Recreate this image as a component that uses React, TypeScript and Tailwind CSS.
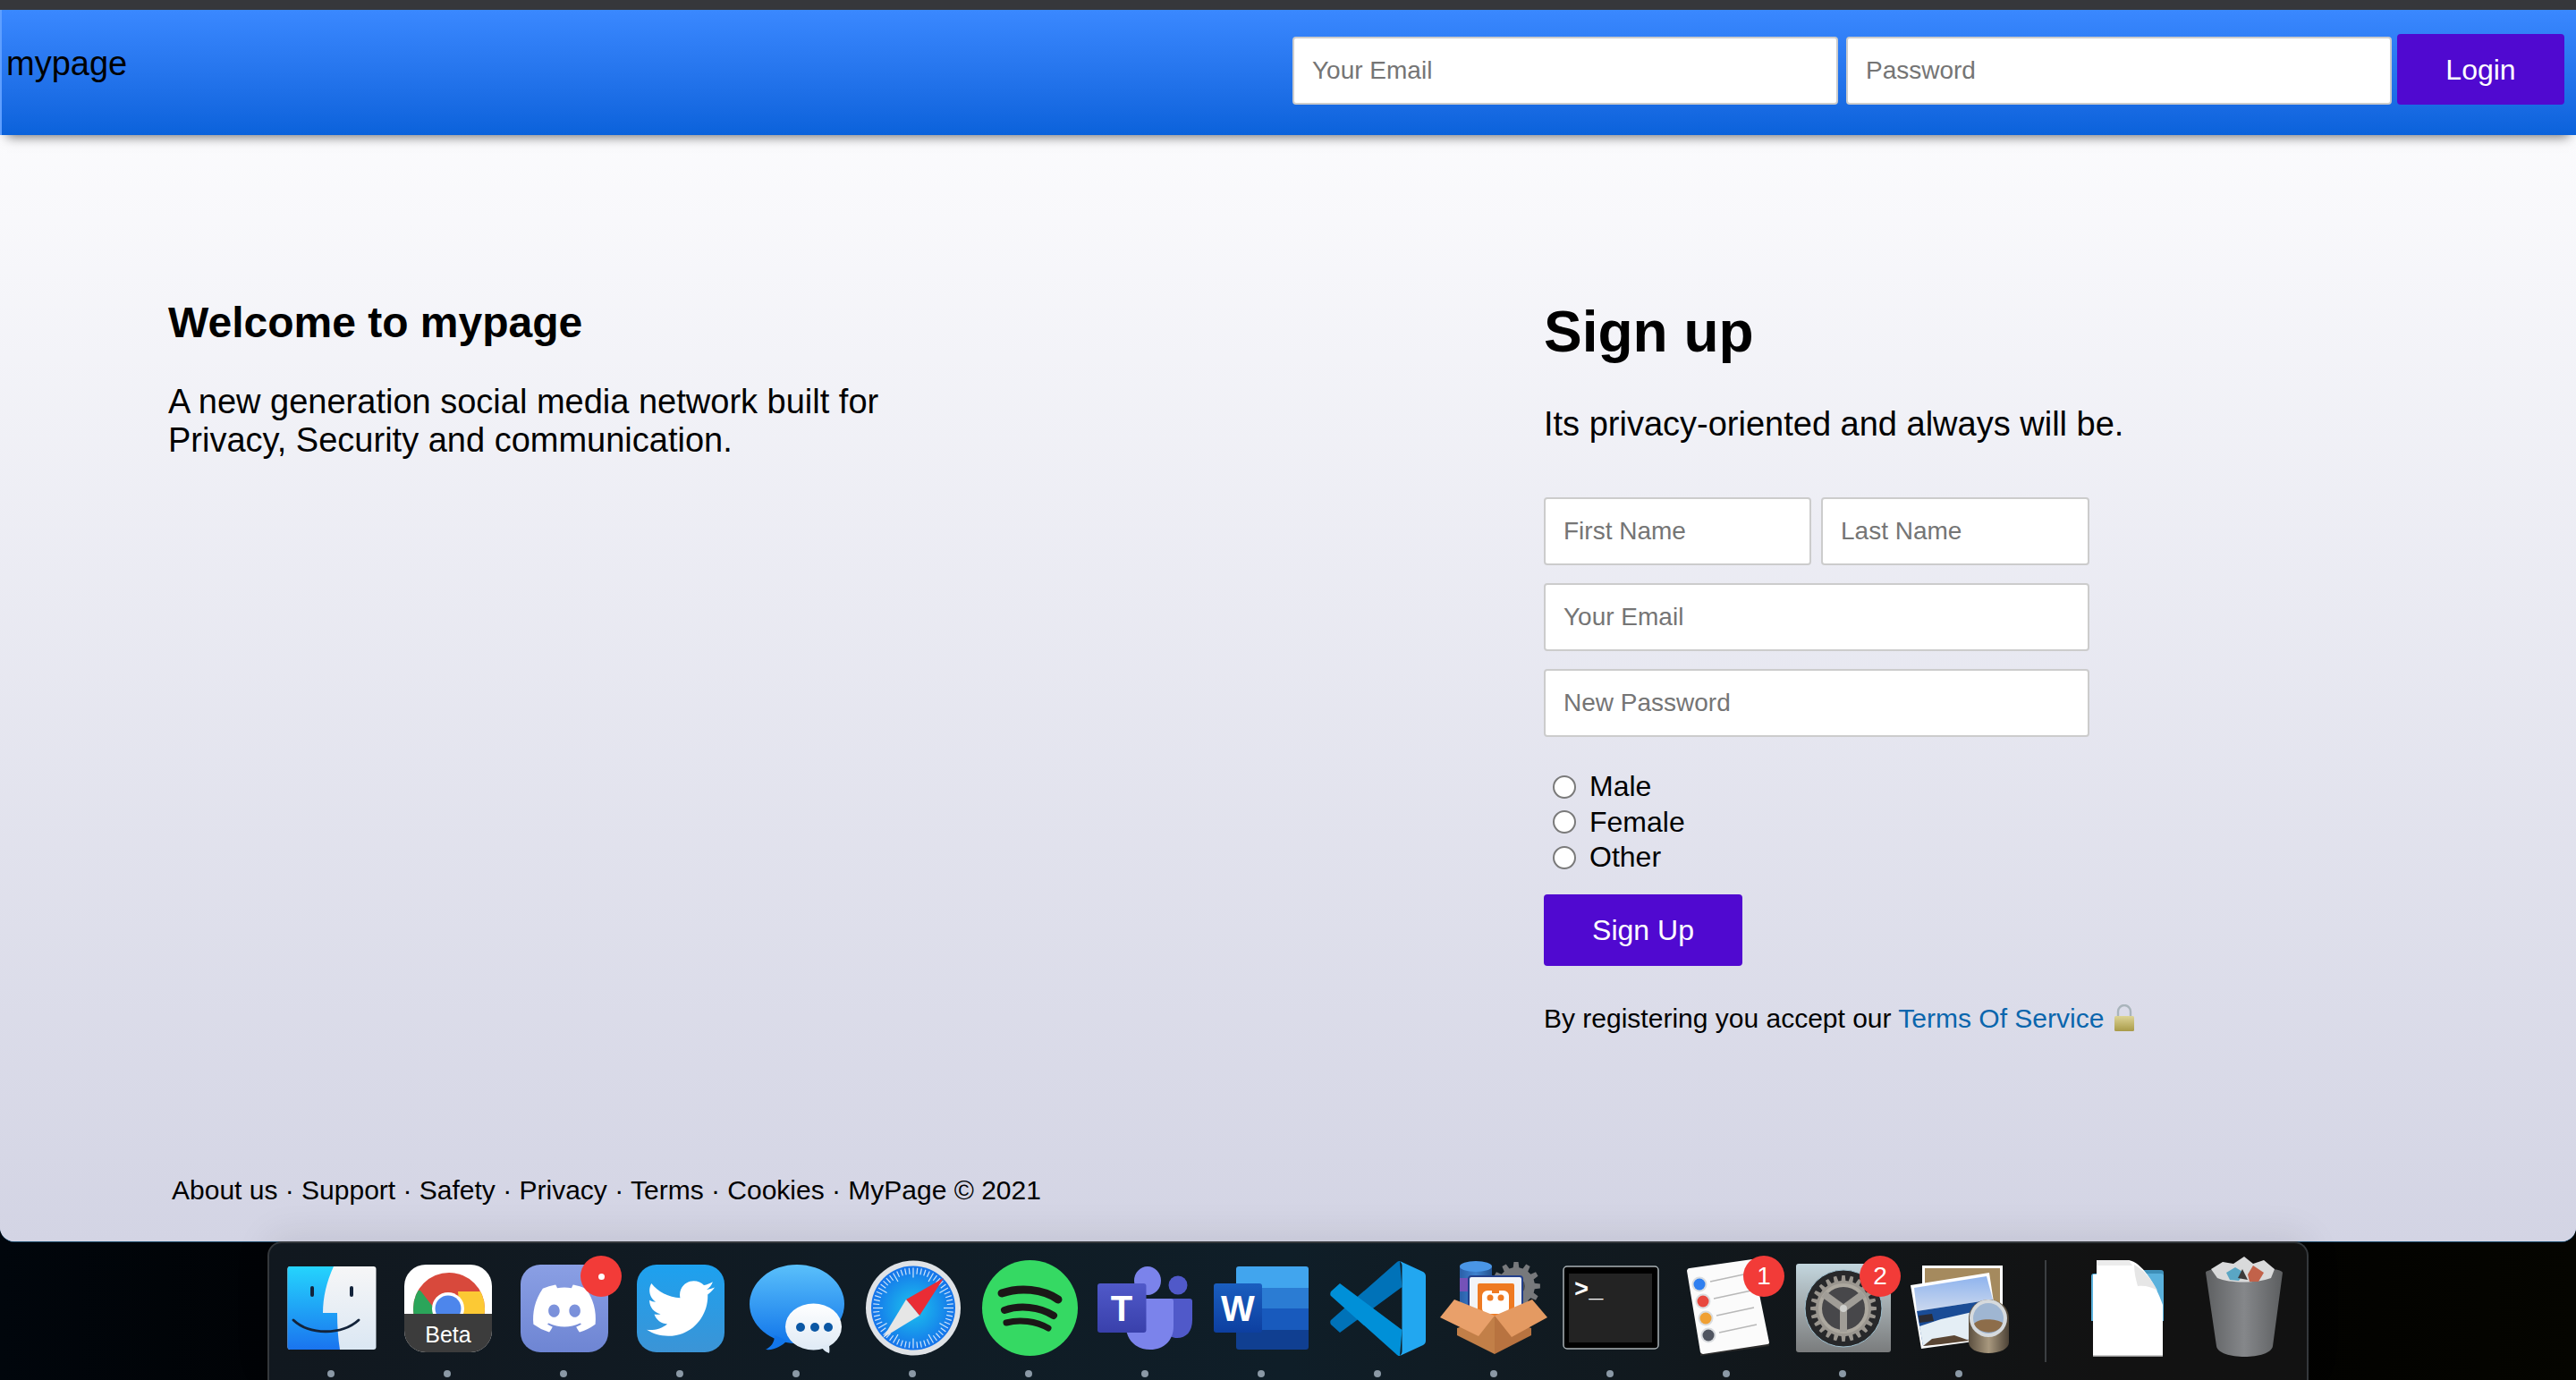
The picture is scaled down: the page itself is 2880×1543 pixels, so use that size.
import type { ReactNode } from "react";
import { FaDiscord, FaTwitter } from "react-icons/fa";

const inputClass =
  "h-[76px] rounded-[4px] border-2 border-[#cccccc] bg-white px-[20px] text-[28px] text-black outline-none placeholder:text-[#757575]";

const footerText = "About us · Support · Safety · Privacy · Terms · Cookies · MyPage © 2021";

const range = (n: number) => Array.from({ length: n }, (_, i) => i);

function gearPath(cx: number, cy: number, outer: number, inner: number, teeth: number) {
  const pts: string[] = [];
  range(teeth).forEach((i) => {
    const step = (Math.PI * 2) / teeth;
    const a = i * step;
    const offsets: [number, number][] = [
      [-0.3, inner],
      [-0.18, outer],
      [0.18, outer],
      [0.3, inner],
    ];
    offsets.forEach(([o, r]) => {
      pts.push(`${(cx + Math.cos(a + o * step) * r).toFixed(2)},${(cy + Math.sin(a + o * step) * r).toFixed(2)}`);
    });
  });
  return `M${pts.join("L")}Z`;
}

function Svg({ children }: { children: ReactNode }) {
  return (
    <svg viewBox="0 0 120 120" className="block h-[120px] w-[120px] overflow-visible">
      {children}
    </svg>
  );
}

function Finder() {
  return (
    <Svg>
      <defs>
        <linearGradient id="finderBlue" x1="0" y1="0" x2="0" y2="1">
          <stop offset="0" stopColor="#25d4fd" />
          <stop offset="1" stopColor="#1a74ef" />
        </linearGradient>
        <linearGradient id="finderWhite" x1="0" y1="0" x2="0" y2="1">
          <stop offset="0" stopColor="#f6f6f7" />
          <stop offset="1" stopColor="#dbe7f3" />
        </linearGradient>
      </defs>
      <rect x="11.5" y="15" width="99" height="93" rx="3" fill="url(#finderWhite)" />
      <path d="M14.5 15H63C55 32 51 50 51 67H67C67 82 68 96 70 108H14.5a3 3 0 0 1-3-3V18a3 3 0 0 1 3-3Z" fill="url(#finderBlue)" />
      <rect x="37" y="37" width="4" height="12" rx="2" fill="#13233a" />
      <rect x="81" y="37" width="4" height="12" rx="2" fill="#13233a" />
      <path d="M18 75C36 92 72 92 91 75" fill="none" stroke="#13233a" strokeWidth="3" strokeLinecap="round" />
    </Svg>
  );
}

function Chrome() {
  return (
    <Svg>
      <defs>
        <clipPath id="chromeTop">
          <rect x="12" y="13" width="98" height="55" />
        </clipPath>
        <clipPath id="chromeRound">
          <circle cx="62" cy="62" r="40" />
        </clipPath>
      </defs>
      <rect x="12" y="13" width="98" height="98" rx="24" fill="#ffffff" />
      <path d="M12 68H110V87a24 24 0 0 1-24 24H36a24 24 0 0 1-24-24Z" fill="#3c3c3c" />
      <g clipPath="url(#chromeTop)">
        <g clipPath="url(#chromeRound)">
          <rect x="20" y="20" width="84" height="50" fill="#d8493c" />
          <path d="M30 42L50 68H15V42Z" fill="#2ba55a" />
          <path d="M104 43H72L74 68H104Z" fill="#fcc934" />
        </g>
        <circle cx="61" cy="62" r="18" fill="#ffffff" />
        <circle cx="61" cy="62" r="14.5" fill="#4d86ec" />
      </g>
      <text x="61" y="100" textAnchor="middle" fontFamily="Liberation Sans, sans-serif" fontSize="25" fill="#ffffff">
        Beta
      </text>
    </Svg>
  );
}

function Discord() {
  return (
    <Svg>
      <defs>
        <linearGradient id="discordBg" x1="0" y1="0" x2="0" y2="1">
          <stop offset="0" stopColor="#8a9fe4" />
          <stop offset="1" stopColor="#6e85d3" />
        </linearGradient>
      </defs>
      <rect x="12" y="13" width="98" height="98" rx="22" fill="url(#discordBg)" />
      <g color="#ffffff">
        <FaDiscord x={23} y={24} size={76} />
      </g>
    </Svg>
  );
}

function Twitter() {
  return (
    <Svg>
      <defs>
        <linearGradient id="twitterBg" x1="0" y1="0" x2="0" y2="1">
          <stop offset="0" stopColor="#1da1ef" />
          <stop offset="1" stopColor="#3b94d6" />
        </linearGradient>
      </defs>
      <rect x="12" y="13" width="98" height="98" rx="22" fill="url(#twitterBg)" />
      <g color="#ffffff">
        <FaTwitter x={23} y={24} size={76} />
      </g>
    </Svg>
  );
}

function Messages() {
  return (
    <Svg>
      <defs>
        <linearGradient id="msgBlue" x1="0" y1="0" x2="0" y2="1">
          <stop offset="0" stopColor="#5ac0fb" />
          <stop offset="1" stopColor="#1276ea" />
        </linearGradient>
        <linearGradient id="msgWhite" x1="0" y1="0" x2="0" y2="1">
          <stop offset="0" stopColor="#ffffff" />
          <stop offset="1" stopColor="#dfeaf5" />
        </linearGradient>
      </defs>
      <ellipse cx="61" cy="57" rx="53" ry="44" fill="url(#msgBlue)" />
      <path d="M36 92C36 100 32 105 26 108C36 109 44 104 50 98Z" fill="#1276ea" />
      <ellipse cx="79.5" cy="82.5" rx="31.5" ry="26" fill="url(#msgWhite)" />
      <path d="M88 104C90 108 92 110 97 112C98 109 97 106 97 102Z" fill="#dfeaf5" />
      <circle cx="65" cy="83" r="5" fill="#0b57a4" />
      <circle cx="81" cy="83" r="5" fill="#0b57a4" />
      <circle cx="96" cy="83" r="5" fill="#0b57a4" />
    </Svg>
  );
}

function Safari() {
  return (
    <Svg>
      <defs>
        <radialGradient id="safariBg">
          <stop offset="0" stopColor="#1cc4ee" />
          <stop offset="1" stopColor="#1573ea" />
        </radialGradient>
      </defs>
      <circle cx="61" cy="61.5" r="53" fill="#dfe2e6" />
      <circle cx="61" cy="61.5" r="47" fill="url(#safariBg)" />
      {range(60).map((i) => {
        const a = (i * Math.PI) / 30;
        const r = i % 5 === 0 ? 34 : 38;
        return (
          <line
            key={i}
            x1={61 + Math.cos(a) * r}
            y1={61.5 + Math.sin(a) * r}
            x2={61 + Math.cos(a) * 45}
            y2={61.5 + Math.sin(a) * 45}
            stroke="#ffffff"
            strokeOpacity="0.8"
            strokeWidth="1.2"
          />
        );
      })}
      <path d="M95 28L53 52L68 70Z" fill="#ea2c35" />
      <path d="M27 95L53 52L68 70Z" fill="#e6e6e6" />
    </Svg>
  );
}

function Spotify() {
  return (
    <Svg>
      <circle cx="61.5" cy="61.5" r="53.5" fill="#35d963" />
      <g fill="none" stroke="#1b1717" strokeLinecap="round">
        <path d="M30 45C50 38 76 40 93 52" strokeWidth="9" />
        <path d="M33 64C50 58 72 60 88 70" strokeWidth="8" />
        <path d="M35 78C50 74 68 76 82 84" strokeWidth="7" />
      </g>
    </Svg>
  );
}

function Teams() {
  return (
    <Svg>
      <defs>
        <linearGradient id="teamsTile" x1="0" y1="0" x2="0" y2="1">
          <stop offset="0" stopColor="#5059c9" />
          <stop offset="1" stopColor="#3940ab" />
        </linearGradient>
      </defs>
      <circle cx="97" cy="36" r="10.5" fill="#5059c9" />
      <path d="M85 51H110a3 3 0 0 1 3 3V75C113 88 106 95 96 95C85 95 80 85 80 75Z" fill="#5059c9" />
      <ellipse cx="63" cy="31" rx="15" ry="16" fill="#7b83eb" />
      <path d="M42 51H89a3 3 0 0 1 3 3V82C92 98 81 108 66 108C51 108 39 98 39 82V54a3 3 0 0 1 3-3Z" fill="#7b83eb" />
      <rect x="7" y="34" width="54.5" height="55" rx="3" fill="url(#teamsTile)" />
      <text x="34" y="76" textAnchor="middle" fontFamily="Liberation Sans, sans-serif" fontWeight="700" fontSize="40" fill="#ffffff">
        T
      </text>
    </Svg>
  );
}

function Word() {
  return (
    <Svg>
      <defs>
        <linearGradient id="wordTile" x1="0" y1="0" x2="0" y2="1">
          <stop offset="0" stopColor="#1a5ebf" />
          <stop offset="1" stopColor="#0d3fa0" />
        </linearGradient>
      </defs>
      <path d="M35 15H110a3 3 0 0 1 3 3V39H32V18a3 3 0 0 1 3-3Z" fill="#41a5ee" />
      <rect x="32" y="39" width="81" height="23" fill="#2b7cd3" />
      <rect x="32" y="62" width="81" height="24" fill="#185abd" />
      <path d="M32 86H113V105a3 3 0 0 1-3 3H35a3 3 0 0 1-3-3Z" fill="#103f91" />
      <rect x="7" y="34" width="54" height="55" rx="3" fill="url(#wordTile)" />
      <text x="34" y="76" textAnchor="middle" fontFamily="Liberation Sans, sans-serif" fontWeight="700" fontSize="40" fill="#ffffff">
        W
      </text>
    </Svg>
  );
}

function VSCode() {
  return (
    <Svg>
      <path d="M85 9L87.5 38L18 89L8 80C7 78 7 76 8 75L82 10C83 9 84 9 85 9Z" fill="#0072b8" />
      <path d="M18 34L8 43C7 45 7 47 8 48L82 114C83 115 84 115 85 115L87.5 86Z" fill="#0090d8" />
      <path d="M85 9L111 21C113 22 114 24 114 26V98C114 100 113 102 111 103L85 115C86 114 87.5 112 87.5 110V14C87.5 12 86 10 85 9Z" fill="#22a7f0" />
    </Svg>
  );
}

function Xampp() {
  return (
    <Svg>
      <defs>
        <linearGradient id="dbSide" x1="0" y1="0" x2="1" y2="0">
          <stop offset="0" stopColor="#2a5fa8" />
          <stop offset="0.5" stopColor="#3f82cf" />
          <stop offset="1" stopColor="#24528f" />
        </linearGradient>
      </defs>
      <path d={gearPath(85, 37, 27, 21, 12)} fill="#77797c" />
      <circle cx="85" cy="37" r="10" fill="#4c4e50" />
      <rect x="22" y="15" width="36" height="44" fill="url(#dbSide)" />
      <rect x="22" y="28" width="36" height="15" fill="#7552b8" />
      <ellipse cx="40" cy="15" rx="18" ry="6" fill="#4a96e6" />
      <rect x="32" y="26" width="60" height="46" rx="3" fill="#f2f4f8" stroke="#23408c" strokeWidth="2" />
      <rect x="42" y="34" width="41" height="36" rx="2" fill="#ee7a22" />
      <rect x="47" y="42" width="30" height="26" rx="6" fill="#ffffff" />
      <circle cx="56" cy="50" r="3.5" fill="#ee7a22" />
      <circle cx="68" cy="50" r="3.5" fill="#ee7a22" />
      <rect x="58" y="42" width="8" height="3" fill="#ee7a22" />
      <path d="M19 84L61 70V113L19 92Z" fill="#c27f48" />
      <path d="M102 84L61 70V113L102 92Z" fill="#b87340" />
      <path d="M0 72L16 52L61 70L43 93Z" fill="#e9a06a" />
      <path d="M61 70L103 52L120 72L80 94Z" fill="#e49a62" />
    </Svg>
  );
}

function Terminal() {
  return (
    <Svg>
      <rect x="8" y="15" width="106" height="92" rx="4" fill="#000000" stroke="#a9b1b5" strokeWidth="1.5" />
      <rect x="14" y="23" width="93" height="77" fill="#232323" />
      <text x="20" y="49" fontFamily="Liberation Mono, monospace" fontWeight="700" fontSize="27" fill="#ffffff">
        &gt;_
      </text>
    </Svg>
  );
}

function Reminders() {
  const rows = [
    { x: 30, y: 35, c: "#2f7ff0" },
    { x: 34, y: 54, c: "#e8483f" },
    { x: 37, y: 73, c: "#f0a033" },
    { x: 40, y: 92, c: "#505560" },
  ];
  return (
    <Svg>
      <path d="M31 115L108 104L108 100L31 111Z" fill="#2b2b2b" />
      <path d="M19 17L89 7L108 100C108 101 107 102 106 102L34 113C33 113 32 112 31 111L16 20C16 19 17 17 19 17Z" fill="#fbfbfb" />
      {rows.map((r) => (
        <g key={r.y}>
          <circle cx={r.x} cy={r.y} r="8.5" fill="#dadde0" />
          <circle cx={r.x} cy={r.y} r="6.5" fill={r.c} />
          <line x1={r.x + 12} y1={r.y - 3} x2={r.x + 54} y2={r.y - 12} stroke="#b8b8b8" strokeWidth="1.5" />
        </g>
      ))}
    </Svg>
  );
}

function SystemPrefs() {
  return (
    <Svg>
      <defs>
        <linearGradient id="prefsBg" x1="0" y1="0" x2="0" y2="1">
          <stop offset="0" stopColor="#c3d6de" />
          <stop offset="0.5" stopColor="#a0a8ab" />
          <stop offset="1" stopColor="#7a7c7d" />
        </linearGradient>
      </defs>
      <rect x="8" y="12" width="106" height="99" rx="3" fill="url(#prefsBg)" />
      <circle cx="61" cy="62" r="43" fill="#27282a" stroke="#9fc0cf" strokeWidth="1" />
      <path d={gearPath(61, 62, 37, 31, 24)} fill="#9a968f" />
      <circle cx="61" cy="62" r="26" fill="#47474a" />
      <circle cx="61" cy="62" r="26" fill="none" stroke="#aca89f" strokeWidth="4" />
      <g stroke="#a09d97" strokeWidth="8">
        <line x1="61" y1="62" x2="61" y2="88" />
        <line x1="61" y1="62" x2="39" y2="46" />
        <line x1="61" y1="62" x2="83" y2="46" />
      </g>
      <circle cx="61" cy="62" r="4" fill="#cfd0cd" />
    </Svg>
  );
}

function Preview() {
  return (
    <Svg>
      <defs>
        <linearGradient id="previewSky" x1="0" y1="0" x2="0" y2="1">
          <stop offset="0" stopColor="#8fb4ee" />
          <stop offset="1" stopColor="#cbd8ee" />
        </linearGradient>
        <linearGradient id="previewLens" x1="0" y1="0" x2="1" y2="0">
          <stop offset="0" stopColor="#5c5040" />
          <stop offset="0.5" stopColor="#a8987e" />
          <stop offset="1" stopColor="#4c4236" />
        </linearGradient>
      </defs>
      <rect x="19" y="14" width="90" height="50" fill="#ffffff" />
      <rect x="22" y="17" width="84" height="47" fill="#a58a5e" />
      <path d="M6 36L94 22L105 95L18 107Z" fill="#ffffff" />
      <path d="M10 39L91 26L98 52L13 65Z" fill="url(#previewSky)" />
      <path d="M13 65L98 52L103 92L20 104Z" fill="#1a4c96" />
      <path d="M16 82L40 74L75 66L100 72L103 92L20 104Z" fill="#e4eef5" />
      <path d="M15 70L30 68L32 76L16 78Z" fill="#2c2c34" />
      <path d="M20 104L30 96L55 92L72 98L40 102Z" fill="#5a4634" />
      <path d="M71 73C71 61 81 52 93 52C106 52 116 61 116 73V100C116 107 106 112 93 112C80 112 71 107 71 100Z" fill="url(#previewLens)" />
      <circle cx="93" cy="73" r="21" fill="#d6dadd" />
      <circle cx="93" cy="73" r="17" fill="#9fb6d2" />
      <path d="M77 79C84 72 102 74 109 78C106 92 82 92 77 79Z" fill="#8d6d4a" />
    </Svg>
  );
}

function FileIcon() {
  return (
    <Svg>
      <path d="M76 19H96a3 3 0 0 1 3 3V30H76Z" fill="#3e8fb8" />
      <path d="M21 23H96a3 3 0 0 1 3 3V76H18V26a3 3 0 0 1 3-3Z" fill="#5ab1dc" />
      <path d="M24 8H60C74 10 90 34 98 58V116H20V24H24Z" fill="#ffffff" />
      <path d="M24 8H60L64 14H24Z" fill="#ececec" />
      <path d="M66 13C66 22 68 30 70 37C78 36 86 38 92 42C86 30 76 18 66 13Z" fill="#e6e6e6" />
      <rect x="20" y="114.5" width="78" height="1.5" fill="#9a9a9a" />
    </Svg>
  );
}

function Trash() {
  return (
    <Svg>
      <defs>
        <linearGradient id="trashBody" x1="0" y1="0" x2="1" y2="0">
          <stop offset="0" stopColor="#5e6062" />
          <stop offset="0.5" stopColor="#85878a" />
          <stop offset="1" stopColor="#5c5e60" />
        </linearGradient>
      </defs>
      <path d="M19 22C19 14 105 14 105 22L94 104C92 120 33 120 31 104Z" fill="url(#trashBody)" />
      <path d="M25 18L38 10L50 12L62 4L72 12L84 8L96 18L92 28C76 34 46 34 32 28Z" fill="#d9dadb" />
      <path d="M42 22L52 16L62 22L56 31L46 30Z" fill="#5aa6c4" />
      <path d="M66 24L72 14L84 22L78 32L68 32Z" fill="#c2624a" />
      <path d="M55 28L60 18L66 30Z" fill="#3d3a3a" />
    </Svg>
  );
}

function Lock() {
  return (
    <svg viewBox="0 0 24 30" className="ml-[11px] inline-block h-[30px] w-[24px] align-[-4px]">
      <defs>
        <linearGradient id="lockBody" x1="0" y1="0" x2="0" y2="1">
          <stop offset="0" stopColor="#ddd496" />
          <stop offset="1" stopColor="#a89a48" />
        </linearGradient>
      </defs>
      <path d="M5 14V8a7 7 0 0 1 14 0v5" fill="none" stroke="#a9b4bb" strokeWidth="2.4" />
      <rect x="1" y="13" width="22" height="17" rx="1.5" fill="url(#lockBody)" />
    </svg>
  );
}

function DockItem({ icon, badge }: { icon: ReactNode; badge?: ReactNode }) {
  return (
    <div className="relative flex w-[130px] flex-col items-center pt-[11px]">
      {icon}
      <div className="mt-[11px] h-[8px] w-[8px] rounded-full bg-[#8b99a6]" />
      {badge && (
        <div className="absolute left-[84px] top-[14px] flex h-[46px] w-[46px] items-center justify-center rounded-full bg-[#f23b38] text-[28px] leading-none text-white">
          {badge}
        </div>
      )}
    </div>
  );
}

function Dock() {
  return (
    <div className="flex h-[155px] w-[2282px] rounded-t-[16px] border-x-2 border-t-2 border-[#34383c] bg-linear-to-r from-[#11181f] via-[#0f1e28] to-[#121212] to-90% pl-[4px] shadow-[0_-8px_40px_rgba(0,0,0,0.08)]">
      <DockItem icon={<Finder />} />
      <DockItem icon={<Chrome />} />
      <DockItem icon={<Discord />} badge={<span className="h-[7px] w-[7px] rounded-full bg-white" />} />
      <DockItem icon={<Twitter />} />
      <DockItem icon={<Messages />} />
      <DockItem icon={<Safari />} />
      <DockItem icon={<Spotify />} />
      <DockItem icon={<Teams />} />
      <DockItem icon={<Word />} />
      <DockItem icon={<VSCode />} />
      <DockItem icon={<Xampp />} />
      <DockItem icon={<Terminal />} />
      <DockItem icon={<Reminders />} badge="1" />
      <DockItem icon={<SystemPrefs />} badge="2" />
      <DockItem icon={<Preview />} />
      <div className="ml-[31px] mt-[19px] h-[114px] w-[2px] bg-[#3c3f42]" />
      <div className="ml-[28px] flex w-[128px] justify-center pt-[11px]">
        <FileIcon />
      </div>
      <div className="flex w-[126px] justify-center pt-[11px]">
        <Trash />
      </div>
    </div>
  );
}

export default function App() {
  return (
    <div className="flex h-[1543px] w-[2880px] flex-col overflow-hidden bg-linear-to-r from-[#01060c] via-[#000000] to-[#050500] font-['Liberation_Sans',sans-serif] text-black">
      <div className="h-[11px] shrink-0 bg-[#36373b]" />

      <div className="flex h-[1377px] shrink-0 flex-col rounded-b-[16px] bg-[#d3d4e4] shadow-[0_1px_0_#1b4a6b]">
        <header className="relative z-10 flex h-[140px] shrink-0 items-start justify-between border-l-2 border-[#5f9fff] bg-linear-to-b from-[#3a88ff] to-[#0a62db] pl-[5px] pr-[13px] shadow-[0_10px_12px_-8px_rgba(0,0,0,0.55)]">
          <div className="pt-[38px] text-[38px] leading-[44px]">mypage</div>
          <div className="flex items-start pt-[27px]">
            <input placeholder="Your Email" className={`${inputClass} mt-[3px] w-[610px]`} />
            <input placeholder="Password" className={`${inputClass} ml-[9px] mt-[3px] w-[610px]`} />
            <button className="ml-[6px] h-[79px] w-[187px] rounded-[4px] bg-[#5009d0] text-[32px] text-white">Login</button>
          </div>
        </header>

        <div className="flex flex-1 flex-col rounded-b-[16px] bg-linear-to-b from-[#fbfbfd] to-[#d3d4e4]">
          <main className="flex flex-1 pl-[188px]">
            <section className="w-[1538px] pt-[183px]">
              <h2 className="text-[48px] font-bold leading-[54px]">Welcome to mypage</h2>
              <p className="mt-[40px] max-w-[820px] text-[38px] leading-[43px]">
                A new generation social media network built for Privacy, Security and communication.
              </p>
            </section>
            <section className="pt-[183px]">
              <h1 className="text-[64px] font-bold leading-[74px]">Sign up</h1>
              <p className="mt-[45px] text-[38px] leading-[43px]">Its privacy-oriented and always will be.</p>
              <form className="mt-[60px] flex w-[610px] flex-col gap-[20px]">
                <div className="flex gap-[11px]">
                  <input placeholder="First Name" className={`${inputClass} w-[299px]`} />
                  <input placeholder="Last Name" className={`${inputClass} w-[300px]`} />
                </div>
                <input placeholder="Your Email" className={inputClass} />
                <input placeholder="New Password" className={inputClass} />
              </form>
              <div className="mt-[36px] flex flex-col pl-[10px] text-[32px] leading-[39.5px]">
                {["Male", "Female", "Other"].map((g) => (
                  <label key={g} className="flex items-center gap-[15px]">
                    <input
                      type="radio"
                      name="gender"
                      className="m-0 h-[26px] w-[26px] appearance-none rounded-full border-2 border-[#7a7a7a] bg-white"
                    />
                    {g}
                  </label>
                ))}
              </div>
              <button className="mt-[21px] h-[80px] w-[222px] rounded-[4px] bg-[#5009d0] text-[32px] text-white">Sign Up</button>
              <p className="mt-[40px] text-[30px] leading-[38px]">
                By registering you accept our <a className="text-[#0a66ad]">Terms Of Service</a>
                <Lock />
              </p>
            </section>
          </main>

          <footer className="pb-[39px] pl-[192px] text-[30px] leading-[36px]">{footerText}</footer>
        </div>
      </div>

      <div className="flex flex-1 justify-center">
        <Dock />
      </div>
    </div>
  );
}
